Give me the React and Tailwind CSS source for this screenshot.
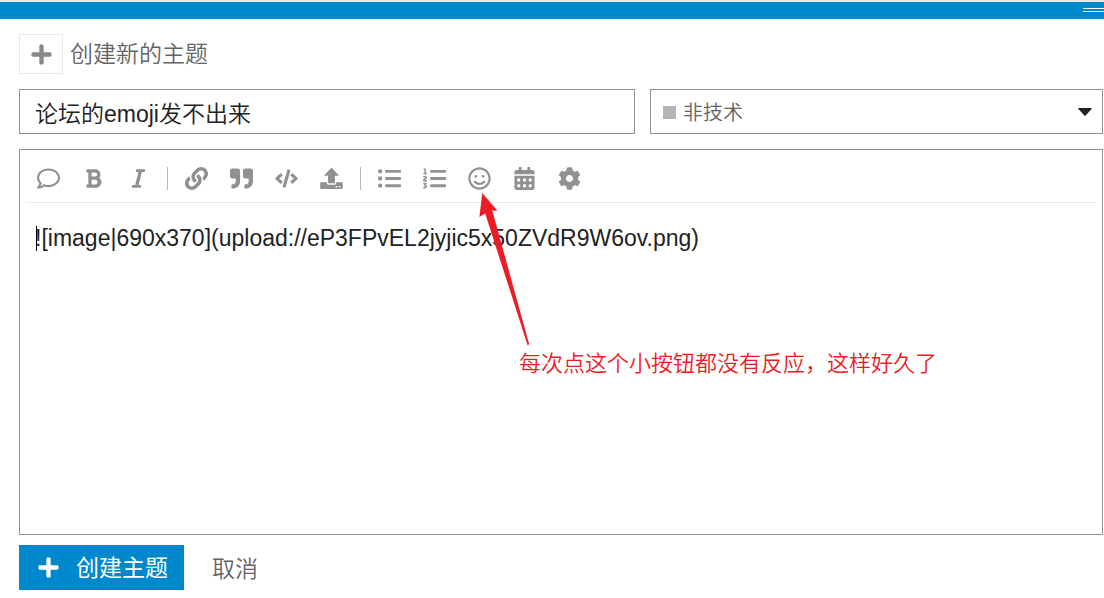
import React from 'react';
import {
  FaBold,
  FaCalendarAlt,
  FaCode,
  FaCog,
  FaItalic,
  FaLink,
  FaListOl,
  FaListUl,
  FaPlus,
  FaQuoteRight,
  FaRegComment,
  FaRegSmile,
} from 'react-icons/fa';

const UploadIcon = ({ className }) => (
  <svg viewBox="0 0 24 24" fill="currentColor" className={className} aria-hidden="true">
    <path d="M12 .6 20 9H15.6V16.2Q15.6 17 14.8 17H9.2Q8.4 17 8.4 16.2V9H4Z" />
    <path
      fillRule="evenodd"
      d="M1.4 16H7.2V17Q7.2 18.5 8.7 18.5H15.3Q16.8 18.5 16.8 17V16H22.6Q23.8 16 23.8 17.2V21.8Q23.8 23 22.6 23H1.4Q.2 23 .2 21.8V17.2Q.2 16 1.4 16ZM16.4 19.8V21.4H18V19.8ZM19.6 19.8V21.4H21.2V19.8Z"
    />
  </svg>
);

// Each inner list is a group, groups are split by a thin rule
const toolbarGroups = [
  [
    { label: '引用', icon: FaRegComment, size: 'size-[23px]' },
    { label: '粗体', icon: FaBold, size: 'size-[21px]' },
    { label: '斜体', icon: FaItalic, size: 'size-[21px]' },
  ],
  [
    { label: '链接', icon: FaLink, size: 'size-[23px]' },
    { label: '块引用', icon: FaQuoteRight, size: 'size-[23px]' },
    { label: '代码', icon: FaCode, size: 'size-[23px]' },
    { label: '上传', icon: UploadIcon, size: 'size-[23px]' },
  ],
  [
    { label: '无序列表', icon: FaListUl, size: 'size-[23px]' },
    { label: '有序列表', icon: FaListOl, size: 'size-[23px]' },
    { label: '表情', icon: FaRegSmile, size: 'size-[23px]' },
    { label: '日期', icon: FaCalendarAlt, size: 'size-[23px]' },
    { label: '选项', icon: FaCog, size: 'size-[23px]' },
  ],
];

const Toolbar = () => (
  <div className="mx-1.5 flex h-[53px] items-center border-b border-[#e9e9e9] pt-1">
    {toolbarGroups.map((group, i) => (
      <React.Fragment key={i}>
        {i > 0 && <span className="mx-1.5 h-[23px] w-px bg-[#b8b8b8]" />}
        {group.map(({ label, icon: Icon, size }) => (
          <button
            key={label}
            type="button"
            aria-label={label}
            className="flex h-10 w-[45px] items-center justify-center text-[#919191]"
          >
            <Icon className={size} />
          </button>
        ))}
      </React.Fragment>
    ))}
  </div>
);

// Red arrow and note drawn over the editor
const Annotation = () => (
  <>
    <svg
      viewBox="0 0 52 156"
      className="pointer-events-none absolute top-[41px] left-[458px] h-[156px] w-[52px]"
      fill="#ed1c24"
      aria-hidden="true"
    >
      <path d="M4.3 2 19.4 19.8 14.3 19.6 51.2 153.2 49.6 154.2 7.2 22.6 1.4 26Z" />
    </svg>
    <p className="pointer-events-none absolute top-[198px] left-[499px] text-[22px] leading-8 whitespace-nowrap text-[#ed1c24]">
      每次点这个小按钮都没有反应，这样好久了
    </p>
  </>
);

export default function App() {
  return (
    <div className="flex min-h-screen flex-col bg-white font-['Liberation_Sans','Noto_Sans_CJK_SC',sans-serif] text-[23px] font-[350] text-[#222]">
      <div className="flex h-[19px] items-start justify-end border-t-2 border-[#e4e9ec] bg-[#0088cc] pt-1.5">
        <span className="h-1 w-[21px] border-y border-white" />
      </div>

      <form className="flex flex-1 flex-col pt-[15px] pr-px pb-2 pl-[19px]" onSubmit={(e) => e.preventDefault()}>
        <div className="flex items-center gap-[7px]">
          <button
            type="button"
            aria-label="操作"
            className="flex h-10 w-11 items-center justify-center border border-[#e9e9e9] text-[#888]"
          >
            <FaPlus className="size-[23px]" />
          </button>
          <h1 className="leading-10 text-[#646464]">创建新的主题</h1>
        </div>

        <div className="mt-[15px] grid grid-cols-[616fr_453fr] gap-[15px]">
          <input
            type="text"
            aria-label="标题"
            defaultValue="论坛的emoji发不出来"
            className="h-[45px] w-full min-w-0 border border-[#919191] px-[15px] outline-none"
          />
          <div className="relative h-[45px] min-w-0">
            <select
              aria-label="类别"
              className="h-full w-full appearance-none border border-[#919191] bg-white pt-0.5 pr-10 pl-8 text-[20px] text-[#646464] outline-none"
            >
              <option>非技术</option>
            </select>
            <span className="pointer-events-none absolute top-[17px] left-[13px] size-[13px] bg-[#b3b5b4]" />
            <svg
              viewBox="0 0 14 8"
              className="pointer-events-none absolute top-[19px] right-[11px] h-2 w-3.5"
              fill="#222"
              aria-hidden="true"
            >
              <path d="M.4 0H13.6Q14 .6 13.4 1.2L7.6 7.4Q7 8 6.4 7.4L.6 1.2Q0 .6 .4 0Z" />
            </svg>
          </div>
        </div>

        <div className="relative mt-[15px] flex flex-1 flex-col border border-[#919191]">
          <Toolbar />
          <textarea
            aria-label="正文"
            defaultValue="![image|690x370](upload://eP3FPvEL2jyjic5x50ZVdR9W6ov.png)"
            className="w-full flex-1 resize-none px-[15px] pt-[19px] leading-8 outline-none"
          />
          <span className="pointer-events-none absolute top-[76px] left-4 h-[25px] w-px bg-black" />
          <Annotation />
        </div>

        <div className="mt-2.5 flex items-center">
          <button
            type="submit"
            className="flex h-[45px] items-center gap-4 bg-[#0088cc] pr-4 pl-[18px] font-normal text-white"
          >
            <FaPlus className="size-[23px]" />
            <span className="pt-0.5">创建主题</span>
          </button>
          <button type="button" className="ml-7 pt-1 text-[#646464]">
            取消
          </button>
        </div>
      </form>
    </div>
  );
}
